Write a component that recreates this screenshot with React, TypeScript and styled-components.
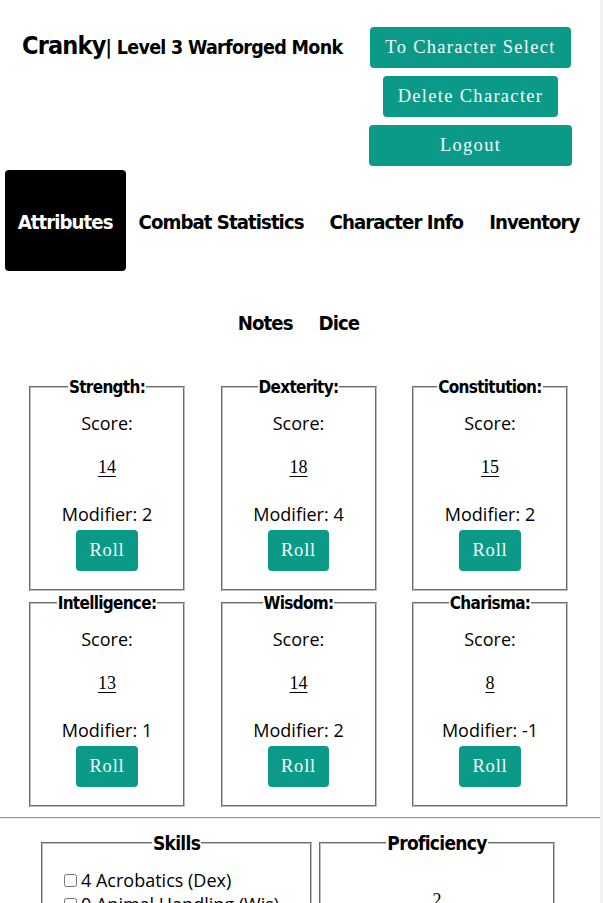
import React from "react";
import styled, { createGlobalStyle, css } from "styled-components";

const GlobalStyle = createGlobalStyle`
  html { background: #f1f1f1; }
  body {
    margin: 0;
    width: 600px;
    min-height: 100vh;
    background: #ffffff;
    color: #000;
    font-family: "Open Sans", "Noto Sans", sans-serif;
  }
`;

const headingFont = `"DejaVu Sans", sans-serif`;
const serifFont = `"Liberation Serif", "DejaVu Serif", serif`;

const Header = styled.header`
  display: flex;
  justify-content: space-between;
  align-items: flex-start;
  padding: 27px 28px 0 22px;
`;

const Title = styled.h1`
  margin: 0;
  font-family: ${headingFont};
  font-stretch: condensed;
  font-weight: 700;
  font-size: 25px;
  line-height: 38px;
  white-space: nowrap;
  letter-spacing: -0.8px;
`;

const Subtitle = styled.span`
  font-size: 19.5px;
  letter-spacing: -0.7px;
`;

const ButtonColumn = styled.div`
  display: flex;
  flex-direction: column;
  align-items: center;
  gap: 8px;
  width: 203px;
`;

const TealButton = styled.button<{ $wide?: boolean }>`
  height: 41px;
  padding: 0 15px;
  border: none;
  border-radius: 4px;
  background: #0b9a88;
  color: #f4fbfa;
  font-family: ${serifFont};
  font-size: 18.5px;
  letter-spacing: 1.3px;
  cursor: pointer;
  white-space: nowrap;
  ${(p) =>
    p.$wide &&
    css`
      align-self: stretch;
    `}
`;

const TabRow = styled.nav`
  display: flex;
  flex-wrap: wrap;
  justify-content: center;
  margin-top: 4px;
  padding-right: 3px;
`;

const Tab = styled.div<{ $active?: boolean }>`
  display: flex;
  align-items: center;
  box-sizing: border-box;
  height: 101px;
  padding: 3px 13px 0;
  border-radius: 4px;
  font-family: ${headingFont};
  font-stretch: condensed;
  font-weight: 700;
  font-size: 20.2px;
  letter-spacing: -0.95px;
  cursor: pointer;
  ${(p) =>
    p.$active &&
    css`
      background: #000;
      color: #fff;
    `}
`;

const AttrGrid = styled.section`
  display: grid;
  grid-template-columns: repeat(3, 156px);
  column-gap: 35.5px;
  row-gap: 2px;
  justify-content: center;
  margin-top: 5px;
  padding-right: 3px;
`;

const Box = styled.fieldset`
  margin: 0;
  padding: 0;
  border: 2px groove #c0c0c0;
  text-align: center;
  min-width: 0;
`;

const BoxLegend = styled.legend`
  padding: 0 1px;
  margin: 0 auto;
  font-family: ${headingFont};
  font-stretch: condensed;
  font-weight: 700;
  font-size: 17px;
  line-height: 20px;
  letter-spacing: -0.7px;
`;

const Label = styled.p`
  margin: 0;
  font-size: 18px;
  line-height: 24px;
`;

const ScoreLabel = styled(Label)`
  margin-top: 14px;
`;

const ModLabel = styled(Label)`
  margin-top: 23px;
`;

const ScoreValue = styled.span`
  display: inline-block;
  margin-top: 20px;
  font-family: ${serifFont};
  font-size: 18px;
  line-height: 24px;
  text-decoration: underline;
  text-underline-offset: 3px;
`;

const RollButton = styled(TealButton)`
  display: block;
  margin: 4px auto 18px;
  padding: 0 13px;
  letter-spacing: 0.8px;
`;

const Rule = styled.hr`
  margin: 10px 0 0;
  border: none;
  border-top: 1px solid #9a9a9a;
  border-bottom: 1px solid #e6e6e6;
`;

const LowerRow = styled.section`
  display: flex;
  gap: 7px;
  padding: 13px 0 0 41px;
`;

const LowerBox = styled(Box)<{ $w: number }>`
  width: ${(p) => p.$w}px;
  box-sizing: border-box;
  text-align: left;
`;

const LowerLegend = styled(BoxLegend)`
  font-size: 19px;
  line-height: 22px;
`;

const SkillList = styled.div`
  display: flex;
  flex-direction: column;
  padding: 14px 0 10px 21px;
`;

const SkillRow = styled.label`
  display: flex;
  align-items: center;
  gap: 4px;
  font-size: 18px;
  line-height: 24px;
`;

const Check = styled.input`
  margin: 0;
  width: 13px;
  height: 13px;
`;

const ProfValue = styled.p`
  margin: 36px 0 0;
  text-align: center;
  font-family: ${serifFont};
  font-size: 18px;
`;

const attributes = [
  { name: "Strength:", score: 14, mod: 2 },
  { name: "Dexterity:", score: 18, mod: 4 },
  { name: "Constitution:", score: 15, mod: 2 },
  { name: "Intelligence:", score: 13, mod: 1 },
  { name: "Wisdom:", score: 14, mod: 2 },
  { name: "Charisma:", score: 8, mod: -1 },
];

const skills = [
  "4 Acrobatics (Dex)",
  "0 Animal Handling (Wis)",
  "1 Arcana (Int)",
  "2 Athletics (Str)",
  "-1 Deception (Cha)",
];

const tabs = ["Attributes", "Combat Statistics", "Character Info", "Inventory", "Notes", "Dice"];

export default function App() {
  return (
    <>
      <GlobalStyle />
      <Header>
        <Title>
          Cranky<Subtitle>| Level 3 Warforged Monk</Subtitle>
        </Title>
        <ButtonColumn>
          <TealButton>To Character Select</TealButton>
          <TealButton>Delete Character</TealButton>
          <TealButton $wide>Logout</TealButton>
        </ButtonColumn>
      </Header>
      <TabRow>
        {tabs.map((t, i) => (
          <Tab key={t} $active={i === 0}>
            {t}
          </Tab>
        ))}
      </TabRow>
      <AttrGrid>
        {attributes.map((a) => (
          <Box key={a.name}>
            <BoxLegend>{a.name}</BoxLegend>
            <ScoreLabel>Score:</ScoreLabel>
            <ScoreValue>{a.score}</ScoreValue>
            <ModLabel>Modifier: {a.mod}</ModLabel>
            <RollButton>Roll</RollButton>
          </Box>
        ))}
      </AttrGrid>
      <Rule />
      <LowerRow>
        <LowerBox $w={271}>
          <LowerLegend>Skills</LowerLegend>
          <SkillList>
            {skills.map((s) => (
              <SkillRow key={s}>
                <Check type="checkbox" />
                {s}
              </SkillRow>
            ))}
          </SkillList>
        </LowerBox>
        <LowerBox $w={236}>
          <LowerLegend>Proficiency</LowerLegend>
          <ProfValue>2</ProfValue>
        </LowerBox>
      </LowerRow>
    </>
  );
}
